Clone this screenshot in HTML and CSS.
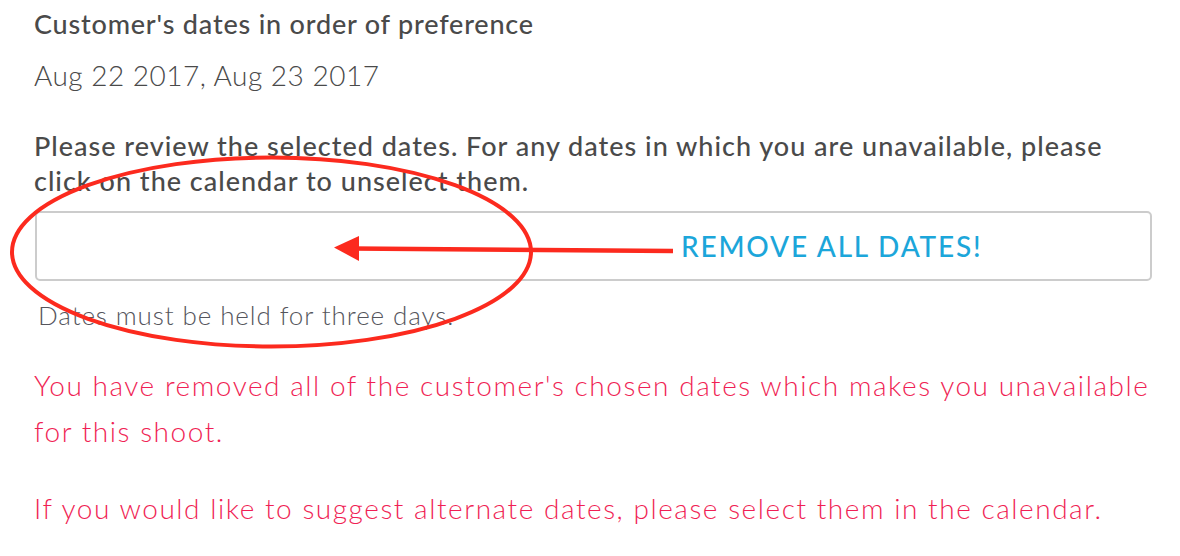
FILE: index.html
```html
<!DOCTYPE html>
<html lang="en">

<head>
    <meta charset="UTF-8">
    <meta name="viewport" content="width=device-width, initial-scale=1.0">
    <title>Shoot dates</title>
    <link rel="stylesheet" href="styles.css">
</head>

<body>
    <div class="page">
        <h2 class="label">Customer's dates in order of preference</h2>
        <p class="dates">Aug 22 2017, Aug 23 2017</p>

        <p class="review">Please review the selected dates. For any dates in which you are unavailable, please click on the calendar to unselect them.</p>

        <div class="date-box"></div>
        <p class="hint">Dates must be held for three days.</p>

        <p class="warning">You have removed all of the customer's chosen dates which makes you unavailable for this shoot.</p>
        <p class="warning">If you would like to suggest alternate dates, please select them in the calendar.</p>
    </div>

    <!-- annotation drawn on top of the screenshot -->
    <svg class="markup" width="1180" height="556" viewBox="0 0 1180 556">
        <ellipse cx="271.5" cy="252" rx="259.5" ry="94.5" fill="none" stroke="#fc2a1e" stroke-width="4" />
        <line x1="673" y1="251" x2="352" y2="248.5" stroke="#fc2a1e" stroke-width="4.5" />
        <polygon points="334,247.5 359,236 359,261" fill="#fc2a1e" />
    </svg>
    <span class="markup-text">REMOVE ALL DATES!</span>
</body>

</html>
```

FILE: styles.css
```css
body {
    margin: 0;
    background: #fff;
    font-family: Lato, "Open Sans", sans-serif;
    color: #4a4a4a;
}

.page {
    width: 1118px;
    padding: 7px 0 0 34px;
}

.label {
    margin: 0;
    font-size: 27px;
    font-weight: 500;
    line-height: 34px;
    letter-spacing: 0.8px;
}

.dates {
    margin: 17px 0 0;
    font-size: 28px;
    font-weight: 300;
    line-height: 34px;
    letter-spacing: 0.5px;
}

.review {
    margin: 36px 0 0;
    font-size: 27px;
    font-weight: 500;
    line-height: 35px;
    letter-spacing: 1px;
}

.date-box {
    height: 66px;
    margin: 13px 0 0 1px;
    border: 2px solid #cccccc;
    border-radius: 5px;
}

.hint {
    margin: 17px 0 0 4px;
    font-size: 26px;
    font-weight: 300;
    line-height: 34px;
    letter-spacing: 0.9px;
    color: #55555c;
}

.warning {
    margin: 30px 0 0;
    font-size: 28px;
    font-weight: 300;
    line-height: 46px;
    letter-spacing: 1.55px;
    color: #f01f55;
}

.warning + .warning {
    margin-top: 31px;
}

.markup {
    position: absolute;
    top: 0;
    left: 0;
}

.markup-text {
    position: absolute;
    top: 229px;
    left: 681px;
    font-family: Lato, sans-serif;
    font-size: 28px;
    font-weight: 500;
    letter-spacing: 1.8px;
    color: #1ca6da;
}
```
